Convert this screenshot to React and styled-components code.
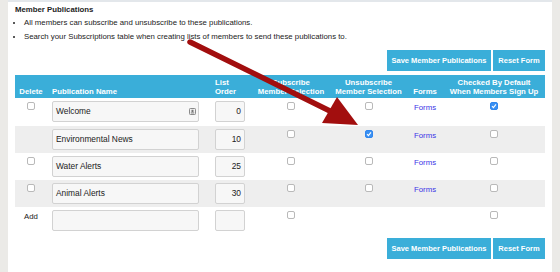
import React from "react";
import styled, { createGlobalStyle } from "styled-components";

const GlobalStyle = createGlobalStyle`
  body {
    margin: 0;
    font-family: "Liberation Sans", Arial, sans-serif;
    color: #222;
  }
`;

const publications = [
  { name: "Welcome", order: "0", del: true, sub: false, unsub: false, forms: true, def: true, icon: true },
  { name: "Environmental News", order: "10", del: false, sub: false, unsub: true, forms: true, def: false },
  { name: "Water Alerts", order: "25", del: true, sub: false, unsub: false, forms: true, def: false },
  { name: "Animal Alerts", order: "30", del: true, sub: false, unsub: false, forms: true, def: false },
];

export default function App() {
  return (
    <Page>
      <GlobalStyle />
      <Panel>
        <Heading>Member Publications</Heading>
        <Notes>
          <li>All members can subscribe and unsubscribe to these publications.</li>
          <li>Search your Subscriptions table when creating lists of members to send these publications to.</li>
        </Notes>
        <ButtonBar />
        <Table>
          <thead>
            <tr>
              <Th $align="center">Delete</Th>
              <Th $pad="5px">Publication Name</Th>
              <Th $pad="8px">List<br />Order</Th>
              <Th $align="center">Subscribe<br />Member Selection</Th>
              <Th $align="center">Unsubscribe<br />Member Selection</Th>
              <Th $align="center">Forms</Th>
              <Th $align="center">Checked By Default<br />When Members Sign Up</Th>
            </tr>
          </thead>
          <tbody>
            {publications.map((p, i) => (
              <Row key={p.name} $shade={i % 2 === 1} $tall={i === 0}>
                <Td $align="center">{p.del && <Check />}</Td>
                <Td $pad="5px">
                  <NameField>
                    <span>{p.name}</span>
                    {p.icon && <CardIcon />}
                  </NameField>
                </Td>
                <Td $pad="8px">
                  <OrderField>{p.order}</OrderField>
                </Td>
                <Td $align="center"><Check checked={p.sub} /></Td>
                <Td $align="center"><Check checked={p.unsub} /></Td>
                <Td $align="center">{p.forms && <FormsLink href="#">Forms</FormsLink>}</Td>
                <Td $align="center"><Check checked={p.def} /></Td>
              </Row>
            ))}
            <Row>
              <Td $align="center"><AddLabel>Add</AddLabel></Td>
              <Td $pad="5px"><NameField /></Td>
              <Td $pad="8px"><OrderField /></Td>
              <Td $align="center"><Check /></Td>
              <Td />
              <Td />
              <Td $align="center"><Check /></Td>
            </Row>
          </tbody>
        </Table>
        <ButtonBar $bottom />
      </Panel>
      <Arrow />
    </Page>
  );
}

function ButtonBar({ $bottom }) {
  return (
    <Bar $bottom={$bottom}>
      <Button $w={104}>Save Member Publications</Button>
      <Button $w={52}>Reset Form</Button>
    </Bar>
  );
}

function Check({ checked }) {
  return (
    <Box $checked={checked}>
      {checked && (
        <svg width="6" height="6" viewBox="0 0 6 6">
          <path d="M1 3.2 L2.4 4.6 L5 1.4" stroke="#fff" strokeWidth="1.1" fill="none" />
        </svg>
      )}
    </Box>
  );
}

function CardIcon() {
  return (
    <svg width="7" height="7" viewBox="0 0 7 7">
      <rect x="0.5" y="0.5" width="6" height="6" rx="0.8" fill="#f2f2f2" stroke="#8a8a8a" />
      <rect x="2.5" y="1.8" width="2" height="2.2" fill="#777" />
      <rect x="1.8" y="4.4" width="3.4" height="1" fill="#777" />
    </svg>
  );
}

function Arrow() {
  return (
    <Overlay width="560" height="272" viewBox="0 0 560 272">
      <line x1="190" y1="42" x2="332" y2="112" stroke="#a20e0e" strokeWidth="5.5" strokeLinecap="round" />
      <polygon points="358,125 322,123 337,97" fill="#a20e0e" />
    </Overlay>
  );
}

const Page = styled.div`
  position: relative;
  display: flex;
  height: 272px;
  padding: 0 8px;
  background: #ebeae7;
  box-sizing: border-box;
`;

const Panel = styled.div`
  flex: 1;
  background: #fff;
  border-top: 2px solid #e3e7eb;
  padding: 3px 7px 0;
  box-sizing: border-box;
`;

const Heading = styled.div`
  font-size: 7.8px;
  font-weight: bold;
  line-height: 10px;
`;

const Notes = styled.ul`
  margin: 1px 0 0;
  padding-left: 9px;
  font-size: 7.8px;
  line-height: 14px;
  li::marker {
    font-size: 7px;
  }
`;

const Bar = styled.div`
  display: flex;
  justify-content: flex-end;
  gap: 2px;
  margin-top: ${(p) => (p.$bottom ? "4px" : "6px")};
`;

const Button = styled.button`
  width: ${(p) => p.$w}px;
  height: 21px;
  padding: 0;
  border: none;
  background: #3aaed9;
  color: #fff;
  font-family: "Liberation Sans", Arial, sans-serif;
  font-size: 7.5px;
  font-weight: bold;
`;

const Table = styled.table`
  width: 100%;
  margin-top: 4px;
  border-collapse: collapse;
  table-layout: fixed;
  th:nth-child(1) { width: 32px; }
  th:nth-child(2) { width: 160px; }
  th:nth-child(3) { width: 45px; }
  th:nth-child(4) { width: 78px; }
  th:nth-child(5) { width: 77px; }
  th:nth-child(6) { width: 36px; }
`;

const Th = styled.th`
  height: 23px;
  padding: 0 0 2px ${(p) => p.$pad || "0"};
  background: #3aaed9;
  color: #fff;
  font-size: 7.75px;
  font-weight: bold;
  line-height: 9px;
  text-align: ${(p) => p.$align || "left"};
  vertical-align: bottom;
  box-sizing: border-box;
`;

const Row = styled.tr`
  background: ${(p) => (p.$shade ? "#eeeeee" : "#fff")};
  height: ${(p) => (p.$tall ? "28px" : "27px")};
`;

const Td = styled.td`
  padding: 3px 0 0 ${(p) => p.$pad || "0"};
  text-align: ${(p) => p.$align || "left"};
  vertical-align: top;
  box-sizing: border-box;
  font-size: 7.8px;
  line-height: 9px;
`;

const Box = styled.span`
  display: inline-flex;
  align-items: center;
  justify-content: center;
  width: 8px;
  height: 8px;
  margin-top: 1px;
  border: 1px solid ${(p) => (p.$checked ? "#2f86ee" : "#b9b9b9")};
  border-radius: 2px;
  background: ${(p) => (p.$checked ? "#3a90f2" : "#fff")};
  box-sizing: border-box;
`;

const Field = styled.div`
  display: flex;
  align-items: center;
  height: 21px;
  border: 1px solid #d2d2d2;
  border-radius: 2px;
  background: #f7f7f7;
  box-sizing: border-box;
  font-size: 8.4px;
  color: #222;
`;

const NameField = styled(Field)`
  width: 147px;
  justify-content: space-between;
  padding: 0 2px 0 3px;
`;

const OrderField = styled(Field)`
  width: 30px;
  justify-content: flex-end;
  padding-right: 3px;
`;

const FormsLink = styled.a`
  display: inline-block;
  margin-top: 2px;
  color: #3b35e6;
  text-decoration: none;
`;

const AddLabel = styled.span`
  display: inline-block;
  margin-top: 2px;
`;

const Overlay = styled.svg`
  position: absolute;
  top: 0;
  left: 0;
  pointer-events: none;
`;
